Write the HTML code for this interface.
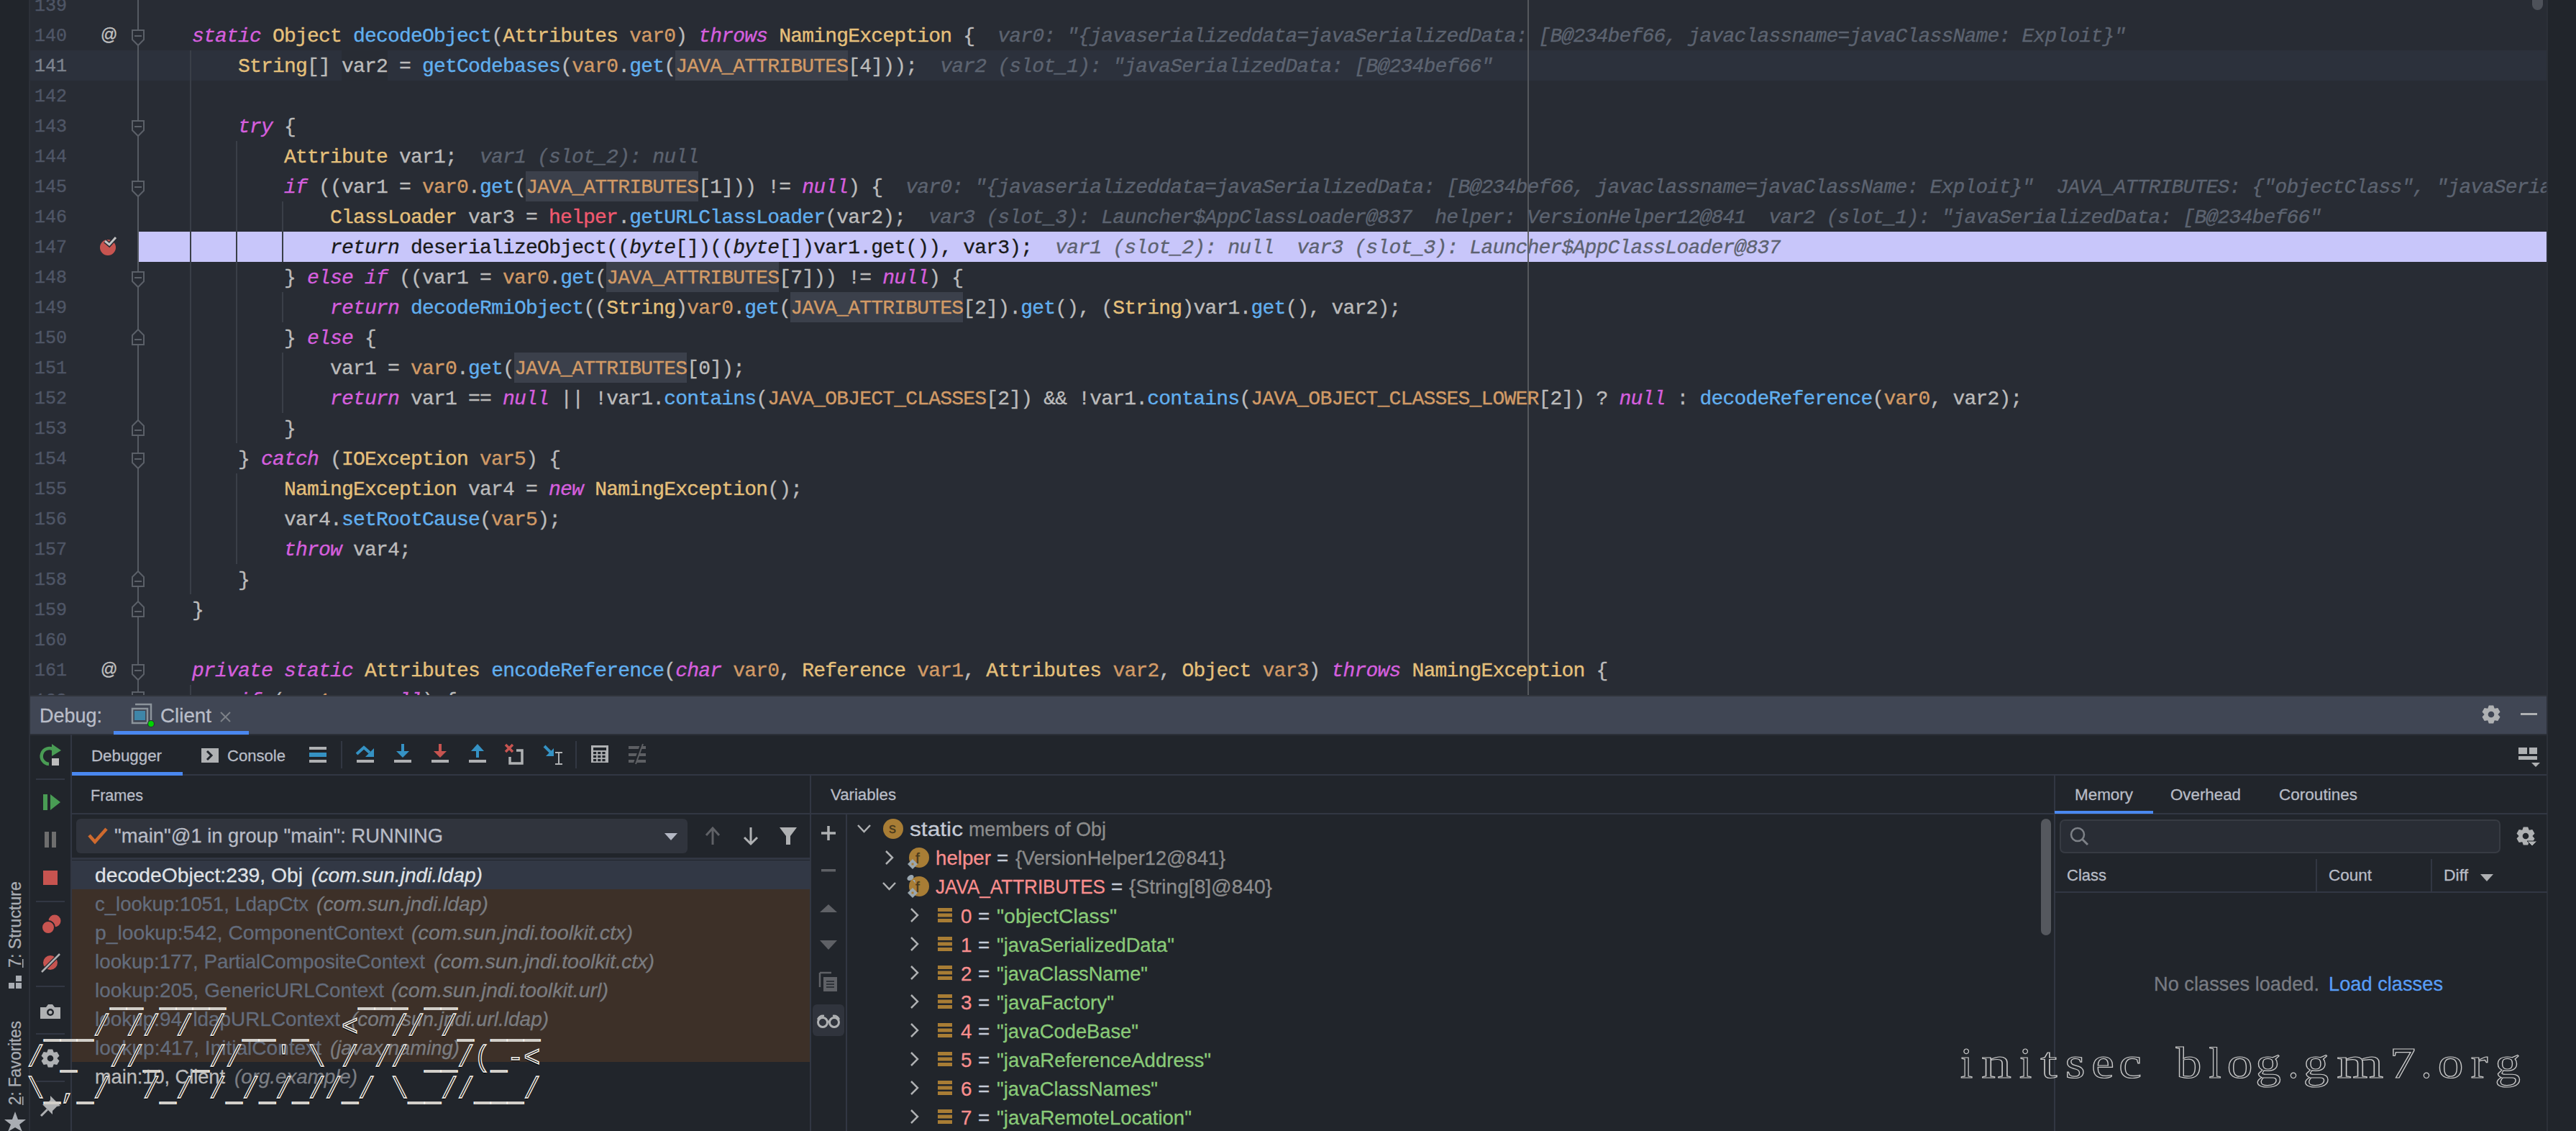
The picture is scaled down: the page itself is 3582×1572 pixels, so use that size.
<!DOCTYPE html><html><head><meta charset="utf-8"><title>debug</title><style>
*{margin:0;padding:0;box-sizing:border-box}
html,body{width:3582px;height:1572px;overflow:hidden;background:#21252b;position:relative}
.a{position:absolute}
.cl{-webkit-text-stroke:0.35px currentColor;position:absolute;height:42px;line-height:42px;font-family:"Liberation Mono",monospace;font-size:28px;letter-spacing:-0.8px;white-space:pre;color:#bbbbbb;padding-top:2px}
.k{color:#d55fde;font-style:italic}
.t{color:#e5c07b}
.c{color:#d19a66}
.p{color:#d19a66}
.h{color:#ef596f}
.f{color:#61afef}
.hint{color:#5c6370;font-style:italic}
.band,.band .k,.band .t,.band .c,.band .p,.band .h,.band .f{color:#1a1a1a}
.band .hint{color:#5d6270}
.k,.t,.c,.p,.h,.f,.hint{-webkit-text-stroke:0.35px currentColor}
.ln{position:absolute;width:60px;left:-9px;text-align:right;height:42px;line-height:42px;font-family:"Liberation Mono",monospace;font-size:25px;color:#4f5666;padding-top:2px;-webkit-text-stroke:0.4px currentColor}
svg text{font-family:"Liberation Sans",sans-serif;white-space:pre}
.art{position:absolute;font-family:"Liberation Mono",monospace;font-size:38.333px;line-height:43.5px;white-space:pre;color:#1c1a18;
 -webkit-text-stroke:1.4px #f6f2ec;text-shadow:1px 0 0 #000,-1px 0 0 #000,0 1px 0 #000,0 -1px 0 #000}
</style></head><body>
<div class="a" style="left:40px;top:0;width:2px;height:1572px;background:#2c3038"></div>
<div class="a" style="left:3541px;top:0;width:2px;height:1572px;background:#2c3038"></div>
<div class="a" style="left:42px;top:0;width:3499px;height:966px;background:#282c34;overflow:hidden">
<div class="a" style="left:0;top:70px;width:3499px;height:42px;background:#2c313c"></div>
<div class="a" style="left:433.0px;top:70px;width:64.0px;height:42px;background:#282c34"></div>
<div class="a" style="left:897.0px;top:70px;width:240.0px;height:42px;background:#3b404b"></div>
<div class="a" style="left:689.0px;top:238px;width:240.0px;height:42px;background:#3b404b"></div>
<div class="a" style="left:801.0px;top:364px;width:240.0px;height:42px;background:#3b404b"></div>
<div class="a" style="left:1057.0px;top:406px;width:240.0px;height:42px;background:#3b404b"></div>
<div class="a" style="left:673.0px;top:490px;width:240.0px;height:42px;background:#3b404b"></div>
<div class="a" style="left:151px;top:322px;width:3348px;height:42px;background:#c8c6fa"></div>
<div class="a" style="left:222px;top:70px;width:2px;height:756px;background:#3a3f48"></div>
<div class="a" style="left:286px;top:196px;width:2px;height:420px;background:#3a3f48"></div>
<div class="a" style="left:286px;top:658px;width:2px;height:126px;background:#3a3f48"></div>
<div class="a" style="left:350px;top:280px;width:2px;height:84px;background:#3a3f48"></div>
<div class="a" style="left:350px;top:406px;width:2px;height:42px;background:#3a3f48"></div>
<div class="a" style="left:350px;top:490px;width:2px;height:84px;background:#3a3f48"></div>
<div class="a" style="left:222px;top:952px;width:2px;height:14px;background:#3a3f48"></div>
<div class="a" style="left:2082px;top:0;width:2px;height:966px;background:#55585d"></div>
<div class="a" style="left:2082px;top:322px;width:2px;height:42px;background:#636468"></div>
<div class="a" style="left:149px;top:0;width:2px;height:966px;background:#555a62"></div>
<svg class="a" style="left:-42px;top:0" width="300" height="966"><path d="M184 42 H200 V55 L192 63 L184 55 Z" fill="#282c34" stroke="#5b6068" stroke-width="2"/><path d="M187 50 H197" stroke="#5b6068" stroke-width="2"/><path d="M184 168 H200 V181 L192 189 L184 181 Z" fill="#282c34" stroke="#5b6068" stroke-width="2"/><path d="M187 176 H197" stroke="#5b6068" stroke-width="2"/><path d="M184 252 H200 V265 L192 273 L184 265 Z" fill="#282c34" stroke="#5b6068" stroke-width="2"/><path d="M187 260 H197" stroke="#5b6068" stroke-width="2"/><path d="M184 378 H200 V391 L192 399 L184 391 Z" fill="#282c34" stroke="#5b6068" stroke-width="2"/><path d="M187 386 H197" stroke="#5b6068" stroke-width="2"/><path d="M184 479 H200 V466 L192 458 L184 466 Z" fill="#282c34" stroke="#5b6068" stroke-width="2"/><path d="M187 472 H197" stroke="#5b6068" stroke-width="2"/><path d="M184 605 H200 V592 L192 584 L184 592 Z" fill="#282c34" stroke="#5b6068" stroke-width="2"/><path d="M187 598 H197" stroke="#5b6068" stroke-width="2"/><path d="M184 630 H200 V643 L192 651 L184 643 Z" fill="#282c34" stroke="#5b6068" stroke-width="2"/><path d="M187 638 H197" stroke="#5b6068" stroke-width="2"/><path d="M184 815 H200 V802 L192 794 L184 802 Z" fill="#282c34" stroke="#5b6068" stroke-width="2"/><path d="M187 808 H197" stroke="#5b6068" stroke-width="2"/><path d="M184 857 H200 V844 L192 836 L184 844 Z" fill="#282c34" stroke="#5b6068" stroke-width="2"/><path d="M187 850 H197" stroke="#5b6068" stroke-width="2"/><path d="M184 924 H200 V937 L192 945 L184 937 Z" fill="#282c34" stroke="#5b6068" stroke-width="2"/><path d="M187 932 H197" stroke="#5b6068" stroke-width="2"/><path d="M184 966 V962 H200 V966" fill="#282c34" stroke="#5b6068" stroke-width="2"/><text x="140" y="56" font-size="23" fill="#c0c0c0" stroke="#c0c0c0" stroke-width="0.4">@</text><text x="140" y="938" font-size="23" fill="#c0c0c0" stroke="#c0c0c0" stroke-width="0.4">@</text><circle cx="150" cy="344" r="11" fill="#c75450"/><path d="M146 335 L152 340 L161 330" fill="none" stroke="#282c34" stroke-width="6"/><path d="M146 335 L152 340 L161 330" fill="none" stroke="#c4c4c4" stroke-width="3"/></svg>
<div class="ln" style="top:-14px;color:#4f5666">139</div>
<div class="ln" style="top:28px;color:#4f5666">140</div>
<div class="ln" style="top:70px;color:#7d838e">141</div>
<div class="ln" style="top:112px;color:#4f5666">142</div>
<div class="ln" style="top:154px;color:#4f5666">143</div>
<div class="ln" style="top:196px;color:#4f5666">144</div>
<div class="ln" style="top:238px;color:#4f5666">145</div>
<div class="ln" style="top:280px;color:#4f5666">146</div>
<div class="ln" style="top:322px;color:#4f5666">147</div>
<div class="ln" style="top:364px;color:#4f5666">148</div>
<div class="ln" style="top:406px;color:#4f5666">149</div>
<div class="ln" style="top:448px;color:#4f5666">150</div>
<div class="ln" style="top:490px;color:#4f5666">151</div>
<div class="ln" style="top:532px;color:#4f5666">152</div>
<div class="ln" style="top:574px;color:#4f5666">153</div>
<div class="ln" style="top:616px;color:#4f5666">154</div>
<div class="ln" style="top:658px;color:#4f5666">155</div>
<div class="ln" style="top:700px;color:#4f5666">156</div>
<div class="ln" style="top:742px;color:#4f5666">157</div>
<div class="ln" style="top:784px;color:#4f5666">158</div>
<div class="ln" style="top:826px;color:#4f5666">159</div>
<div class="ln" style="top:868px;color:#4f5666">160</div>
<div class="ln" style="top:910px;color:#4f5666">161</div>
<div class="ln" style="top:952px;color:#4f5666">162</div>
<div class="cl" style="left:225px;top:-14px"></div>
<div class="cl" style="left:225px;top:28px"><span class="k">static</span> <span class="t">Object</span> <span class="f">decodeObject</span>(<span class="t">Attributes</span> <span class="p">var0</span>) <span class="k">throws</span> <span class="t">NamingException</span> {  <span class="hint">var0: &quot;{javaserializeddata=javaSerializedData: [B@234bef66, javaclassname=javaClassName: Exploit}&quot;</span></div>
<div class="cl" style="left:225px;top:70px">    <span class="t">String</span>[] var2 = <span class="f">getCodebases</span>(<span class="p">var0</span>.<span class="f">get</span>(<span class="c">JAVA_ATTRIBUTES</span>[4]));  <span class="hint">var2 (slot_1): &quot;javaSerializedData: [B@234bef66&quot;</span></div>
<div class="cl" style="left:225px;top:112px"></div>
<div class="cl" style="left:225px;top:154px">    <span class="k">try</span> {</div>
<div class="cl" style="left:225px;top:196px">        <span class="t">Attribute</span> var1;  <span class="hint">var1 (slot_2): null</span></div>
<div class="cl" style="left:225px;top:238px">        <span class="k">if</span> ((var1 = <span class="p">var0</span>.<span class="f">get</span>(<span class="c">JAVA_ATTRIBUTES</span>[1])) != <span class="k">null</span>) {  <span class="hint">var0: &quot;{javaserializeddata=javaSerializedData: [B@234bef66, javaclassname=javaClassName: Exploit}&quot;  JAVA_ATTRIBUTES: {&quot;objectClass&quot;, &quot;javaSerializedData&quot;, &quot;javaClassName&quot;}</span></div>
<div class="cl" style="left:225px;top:280px">            <span class="t">ClassLoader</span> var3 = <span class="h">helper</span>.<span class="f">getURLClassLoader</span>(var2);  <span class="hint">var3 (slot_3): Launcher$AppClassLoader@837  helper: VersionHelper12@841  var2 (slot_1): &quot;javaSerializedData: [B@234bef66&quot;</span></div>
<div class="cl band" style="left:225px;top:322px">            <span class="k">return</span> <span class="f">deserializeObject</span>((<span class="k">byte</span>[])((<span class="k">byte</span>[])var1.<span class="f">get</span>()), var3);  <span class="hint">var1 (slot_2): null  var3 (slot_3): Launcher$AppClassLoader@837</span></div>
<div class="cl" style="left:225px;top:364px">        } <span class="k">else</span> <span class="k">if</span> ((var1 = <span class="p">var0</span>.<span class="f">get</span>(<span class="c">JAVA_ATTRIBUTES</span>[7])) != <span class="k">null</span>) {</div>
<div class="cl" style="left:225px;top:406px">            <span class="k">return</span> <span class="f">decodeRmiObject</span>((<span class="t">String</span>)<span class="p">var0</span>.<span class="f">get</span>(<span class="c">JAVA_ATTRIBUTES</span>[2]).<span class="f">get</span>(), (<span class="t">String</span>)var1.<span class="f">get</span>(), var2);</div>
<div class="cl" style="left:225px;top:448px">        } <span class="k">else</span> {</div>
<div class="cl" style="left:225px;top:490px">            var1 = <span class="p">var0</span>.<span class="f">get</span>(<span class="c">JAVA_ATTRIBUTES</span>[0]);</div>
<div class="cl" style="left:225px;top:532px">            <span class="k">return</span> var1 == <span class="k">null</span> || !var1.<span class="f">contains</span>(<span class="c">JAVA_OBJECT_CLASSES</span>[2]) &amp;&amp; !var1.<span class="f">contains</span>(<span class="c">JAVA_OBJECT_CLASSES_LOWER</span>[2]) ? <span class="k">null</span> : <span class="f">decodeReference</span>(<span class="p">var0</span>, var2);</div>
<div class="cl" style="left:225px;top:574px">        }</div>
<div class="cl" style="left:225px;top:616px">    } <span class="k">catch</span> (<span class="t">IOException</span> <span class="p">var5</span>) {</div>
<div class="cl" style="left:225px;top:658px">        <span class="t">NamingException</span> var4 = <span class="k">new</span> <span class="t">NamingException</span>();</div>
<div class="cl" style="left:225px;top:700px">        var4.<span class="f">setRootCause</span>(<span class="p">var5</span>);</div>
<div class="cl" style="left:225px;top:742px">        <span class="k">throw</span> var4;</div>
<div class="cl" style="left:225px;top:784px">    }</div>
<div class="cl" style="left:225px;top:826px">}</div>
<div class="cl" style="left:225px;top:868px"></div>
<div class="cl" style="left:225px;top:910px"><span class="k">private</span> <span class="k">static</span> <span class="t">Attributes</span> <span class="f">encodeReference</span>(<span class="k">char</span> <span class="p">var0</span>, <span class="t">Reference</span> <span class="p">var1</span>, <span class="t">Attributes</span> <span class="p">var2</span>, <span class="t">Object</span> <span class="p">var3</span>) <span class="k">throws</span> <span class="t">NamingException</span> {</div>
<div class="cl" style="left:225px;top:952px">    <span class="k">if</span> (<span class="p">var1</span> == <span class="k">null</span>) {</div>
<div class="a" style="left:3479px;top:-10px;width:15px;height:24px;border-radius:8px;background:#4d5159"></div>
</div>
<div class="a" style="left:42px;top:966px;width:3499px;height:2px;background:#30343c"></div>
<div class="a" style="left:42px;top:968px;width:3499px;height:52px;background:#404654"></div>
<div class="a" style="left:42px;top:1020px;width:3499px;height:2px;background:#2c3038"></div>
<div class="a" style="left:158px;top:1016px;width:188px;height:5px;background:#4a88f0"></div>
<div class="a" style="left:98px;top:1021px;width:2px;height:551px;background:#323743"></div>
<div class="a" style="left:100px;top:1076px;width:3441px;height:2px;background:#323743"></div>
<div class="a" style="left:100px;top:1073px;width:154px;height:5px;background:#4a88f0"></div>
<div class="a" style="left:100px;top:1130px;width:1026px;height:2px;background:#323743"></div>
<div class="a" style="left:106px;top:1138px;width:850px;height:48px;border-radius:6px;background:#30343d"></div>
<div class="a" style="left:100px;top:1192px;width:1026px;height:3px;background:#323743"></div>
<div class="a" style="left:100px;top:1196px;width:1026px;height:40px;background:#323845"></div>
<div class="a" style="left:100px;top:1236px;width:1026px;height:240px;background:#3d3028"></div>
<div class="a" style="left:1126px;top:1077px;width:2px;height:495px;background:#323743"></div>
<div class="a" style="left:1128px;top:1130px;width:1729px;height:2px;background:#323743"></div>
<div class="a" style="left:1176px;top:1132px;width:2px;height:440px;background:#323743"></div>
<div class="a" style="left:1130px;top:1396px;width:44px;height:44px;border-radius:6px;background:#30343d"></div>
<div class="a" style="left:2838px;top:1138px;width:14px;height:162px;border-radius:7px;background:#55585e"></div>
<div class="a" style="left:2856px;top:1077px;width:2px;height:495px;background:#323743"></div>
<div class="a" style="left:2858px;top:1130px;width:684px;height:2px;background:#323743"></div>
<div class="a" style="left:2857px;top:1127px;width:137px;height:4px;background:#4a88f0"></div>
<div class="a" style="left:2864px;top:1139px;width:613px;height:47px;border-radius:7px;background:#292d35;border:2px solid #373b43"></div>
<div class="a" style="left:3220px;top:1194px;width:2px;height:46px;background:#323743"></div>
<div class="a" style="left:3380px;top:1194px;width:2px;height:46px;background:#323743"></div>
<div class="a" style="left:2858px;top:1239px;width:684px;height:2px;background:#323743"></div>
<svg class="a" style="left:0;top:0" width="3582" height="1572"><text x="55" y="1004" font-size="27.5" fill="#b9bdc8" stroke="#b9bdc8" stroke-width="0.3" textLength="87" lengthAdjust="spacingAndGlyphs">Debug:</text><path d="M188 979 H210 V1003" fill="none" stroke="#8c949b" stroke-width="2.5"/><rect x="184" y="985" width="21" height="20" fill="none" stroke="#8c949b" stroke-width="2.5"/><rect x="187" y="988" width="15" height="13" fill="#3f86a8"/><circle cx="210" cy="1006" r="4.5" fill="#00d400" stroke="#2b2f36" stroke-width="1.2"/><text x="223" y="1004" font-size="27.5" fill="#b9bdc8" stroke="#b9bdc8" stroke-width="0.3" textLength="71" lengthAdjust="spacingAndGlyphs">Client</text><path d="M307 990 L320 1003 M320 990 L307 1003" stroke="#7d8188" stroke-width="2"/><path d="M3460.8 980.4 L3467.2 980.4 L3468.6 984.6 L3469.0 984.8 L3473.3 983.9 L3476.5 989.5 L3473.6 992.8 L3473.6 993.2 L3476.5 996.5 L3473.3 1002.1 L3469.0 1001.2 L3468.6 1001.4 L3467.2 1005.6 L3460.8 1005.6 L3459.4 1001.4 L3459.0 1001.2 L3454.7 1002.1 L3451.5 996.5 L3454.4 993.2 L3454.4 992.8 L3451.5 989.5 L3454.7 983.9 L3459.0 984.8 L3459.4 984.6 Z" fill="#afb1b3"/><circle cx="3464" cy="993" r="4.3" fill="#404654"/><rect x="3505" y="991" width="23" height="3" fill="#afb1b3"/><text x="127" y="1058" font-size="22.4" fill="#b8bcc6" stroke="#b8bcc6" stroke-width="0.3" textLength="98" lengthAdjust="spacingAndGlyphs">Debugger</text><rect x="280" y="1040" width="24" height="20" fill="#afb1b3"/><path d="M288 1044 L294 1050 L288 1056" fill="none" stroke="#21252b" stroke-width="3"/><text x="316" y="1058" font-size="22.4" fill="#b8bcc6" stroke="#b8bcc6" stroke-width="0.3" textLength="81" lengthAdjust="spacingAndGlyphs">Console</text><rect x="430" y="1038" width="24" height="4" fill="#afb1b3"/><rect x="430" y="1046" width="24" height="6" fill="#3592c4"/><rect x="430" y="1056" width="24" height="4" fill="#afb1b3"/><rect x="474" y="1030" width="2" height="38" fill="#323743"/><rect x="496" y="1056" width="24" height="4" fill="#afb1b3"/><path d="M496 1048 L506 1039 L514 1046" fill="none" stroke="#3592c4" stroke-width="4"/><path d="M520 1040 V1052 H508 Z" fill="#3592c4"/><rect x="548" y="1056" width="24" height="4" fill="#afb1b3"/><rect x="558" y="1034" width="4" height="11" fill="#3592c4"/><path d="M551 1044 H569 L560 1053 Z" fill="#3592c4"/><rect x="600" y="1056" width="24" height="4" fill="#afb1b3"/><rect x="610" y="1034" width="4" height="11" fill="#c75450"/><path d="M603 1044 H621 L612 1053 Z" fill="#c75450"/><rect x="652" y="1056" width="24" height="4" fill="#afb1b3"/><rect x="662" y="1042" width="4" height="11" fill="#3592c4"/><path d="M655 1044 H673 L664 1034 Z" fill="#3592c4"/><path d="M718 1043 H726 V1061 H709 V1052" fill="none" stroke="#afb1b3" stroke-width="3.5"/><path d="M703 1035 L713 1045 M713 1035 L703 1045" stroke="#c75450" stroke-width="3.5"/><path d="M757 1037 L768 1048" stroke="#3592c4" stroke-width="4"/><path d="M770 1040 V1051 H759 Z" fill="#3592c4"/><path d="M772 1046 H782 M777 1046 V1062 M772 1062 H782" stroke="#afb1b3" stroke-width="2"/><rect x="800" y="1030" width="2" height="38" fill="#323743"/><rect x="822" y="1036" width="24" height="24" fill="#afb1b3"/><rect x="825" y="1039" width="18" height="4" fill="#21252b"/><rect x="825.0" y="1045" width="4.2" height="3.2" fill="#21252b"/><rect x="825.0" y="1050" width="4.2" height="3.2" fill="#21252b"/><rect x="825.0" y="1055" width="4.2" height="3.2" fill="#21252b"/><rect x="831.2" y="1045" width="4.2" height="3.2" fill="#21252b"/><rect x="831.2" y="1050" width="4.2" height="3.2" fill="#21252b"/><rect x="831.2" y="1055" width="4.2" height="3.2" fill="#21252b"/><rect x="837.4" y="1045" width="4.2" height="3.2" fill="#21252b"/><rect x="837.4" y="1050" width="4.2" height="3.2" fill="#21252b"/><rect x="837.4" y="1055" width="4.2" height="3.2" fill="#21252b"/><path d="M874 1039 H898 M874 1049 H898 M874 1058 H898" stroke="#5d5f63" stroke-width="4"/><path d="M882 1062 L892 1034" stroke="#21252b" stroke-width="3"/><path d="M884 1062 L894 1034" stroke="#5d5f63" stroke-width="2"/><rect x="3502" y="1039" width="12" height="9" fill="#afb1b3"/><rect x="3517" y="1039" width="11" height="9" fill="#afb1b3"/><rect x="3502" y="1051" width="26" height="5" fill="#afb1b3"/><path d="M3520 1060 H3532 L3526 1066 Z" fill="#afb1b3"/><path d="M68 1062 A11 11 0 1 1 75 1042" fill="none" stroke="#499c54" stroke-width="4.5"/><path d="M72 1034 L85 1043 L72 1051 Z" fill="#499c54"/><rect x="72" y="1054" width="10" height="10" fill="#bdbdbd"/><rect x="50" y="1082" width="40" height="2" fill="#323743"/><rect x="60" y="1104" width="6" height="22" fill="#499c54"/><path d="M70 1104 L84 1115 L70 1126 Z" fill="#499c54"/><rect x="62" y="1156" width="6" height="22" fill="#6e6e6e"/><rect x="72" y="1156" width="6" height="22" fill="#6e6e6e"/><rect x="60" y="1210" width="20" height="20" fill="#c75450"/><rect x="50" y="1252" width="40" height="2" fill="#323743"/><circle cx="76" cy="1280" r="8.5" fill="#c75450"/><circle cx="67" cy="1289" r="9" fill="#c75450" stroke="#21252b" stroke-width="2"/><circle cx="70" cy="1338" r="10" fill="#c75450"/><path d="M58 1351 L83 1326" stroke="#21252b" stroke-width="5"/><path d="M58 1351 L83 1326" stroke="#afb1b3" stroke-width="2.5"/><rect x="50" y="1370" width="40" height="2" fill="#323743"/><path d="M56 1400 H64 L67 1396 H73 L76 1400 H84 V1416 H56 Z" fill="#afb1b3"/><circle cx="70" cy="1407" r="5" fill="#21252b"/><circle cx="70" cy="1407" r="2.5" fill="#afb1b3"/><rect x="50" y="1436" width="40" height="2" fill="#323743"/><path d="M66.8 1458.4 L73.2 1458.4 L74.6 1462.6 L75.0 1462.8 L79.3 1461.9 L82.5 1467.5 L79.6 1470.8 L79.6 1471.2 L82.5 1474.5 L79.3 1480.1 L75.0 1479.2 L74.6 1479.4 L73.2 1483.6 L66.8 1483.6 L65.4 1479.4 L65.0 1479.2 L60.7 1480.1 L57.5 1474.5 L60.4 1471.2 L60.4 1470.8 L57.5 1467.5 L60.7 1461.9 L65.0 1462.8 L65.4 1462.6 Z" fill="#afb1b3"/><circle cx="70" cy="1471" r="4.3" fill="#21252b"/><rect x="50" y="1502" width="40" height="2" fill="#323743"/><path d="M70 1523 L84 1537 L79 1538 L73 1544 L73 1549 L59 1535 L64 1535 L70 1529 Z" fill="#afb1b3"/><path d="M66 1542 L57 1551" stroke="#afb1b3" stroke-width="3"/><g transform="translate(29,1345) rotate(-90)"><text x="0" y="0" font-size="23" fill="#a9adb3" stroke="#a9adb3" stroke-width="0.3" textLength="120" lengthAdjust="spacingAndGlyphs">7: Structure</text><rect x="0" y="2" width="12" height="1.5" fill="#a9adb3"/></g><rect x="12" y="1366" width="8" height="8" fill="#a9adb3"/><rect x="22" y="1366" width="8" height="8" fill="#a9adb3"/><rect x="22" y="1356" width="8" height="8" fill="#a9adb3"/><g transform="translate(29,1536) rotate(-90)"><text x="0" y="0" font-size="23" fill="#a9adb3" stroke="#a9adb3" stroke-width="0.3" textLength="117" lengthAdjust="spacingAndGlyphs">2: Favorites</text><rect x="0" y="2" width="12" height="1.5" fill="#a9adb3"/></g><path d="M21 1545 L25 1556 L36 1556 L27 1563 L31 1573 L21 1567 L11 1573 L15 1563 L6 1556 L17 1556 Z" fill="#a9adb3"/><text x="126" y="1113" font-size="22.4" fill="#b8bcc6" stroke="#b8bcc6" stroke-width="0.3" textLength="73" lengthAdjust="spacingAndGlyphs">Frames</text><path d="M124 1161 L132 1170 L148 1152" fill="none" stroke="#cf6a2e" stroke-width="4.5"/><text x="159" y="1171" font-size="27.3" fill="#b8bcc6" stroke="#b8bcc6" stroke-width="0.3" textLength="457" lengthAdjust="spacingAndGlyphs">&quot;main&quot;@1 in group &quot;main&quot;: RUNNING</text><path d="M924 1158 H942 L933 1168 Z" fill="#b4b8c4"/><path d="M991 1174 V1152 M982 1161 L991 1151 L1000 1161" fill="none" stroke="#5f6166" stroke-width="3"/><path d="M1044 1150 V1173 M1035 1164 L1044 1173 L1053 1164" fill="none" stroke="#afb1b3" stroke-width="3"/><path d="M1084 1150 H1108 L1099 1162 V1174 H1093 V1162 Z" fill="#afb1b3"/><text x="132" y="1226" font-size="28" fill="#dfe1e5" stroke="#dfe1e5" stroke-width="0.3" textLength="289" lengthAdjust="spacingAndGlyphs">decodeObject:239, Obj</text><text x="433" y="1226" font-size="28" fill="#dfe1e5" stroke="#dfe1e5" stroke-width="0.3" textLength="238" lengthAdjust="spacingAndGlyphs" font-style="italic">(com.sun.jndi.ldap)</text><text x="132" y="1266" font-size="28" fill="#636c7c" stroke="#636c7c" stroke-width="0.3" textLength="297" lengthAdjust="spacingAndGlyphs">c_lookup:1051, LdapCtx</text><text x="440" y="1266" font-size="28" fill="#7a7c80" stroke="#7a7c80" stroke-width="0.3" textLength="239" lengthAdjust="spacingAndGlyphs" font-style="italic">(com.sun.jndi.ldap)</text><text x="132" y="1306" font-size="28" fill="#636c7c" stroke="#636c7c" stroke-width="0.3" textLength="429" lengthAdjust="spacingAndGlyphs">p_lookup:542, ComponentContext</text><text x="572" y="1306" font-size="28" fill="#7a7c80" stroke="#7a7c80" stroke-width="0.3" textLength="308" lengthAdjust="spacingAndGlyphs" font-style="italic">(com.sun.jndi.toolkit.ctx)</text><text x="132" y="1346" font-size="28" fill="#636c7c" stroke="#636c7c" stroke-width="0.3" textLength="459" lengthAdjust="spacingAndGlyphs">lookup:177, PartialCompositeContext</text><text x="603" y="1346" font-size="28" fill="#7a7c80" stroke="#7a7c80" stroke-width="0.3" textLength="307" lengthAdjust="spacingAndGlyphs" font-style="italic">(com.sun.jndi.toolkit.ctx)</text><text x="132" y="1386" font-size="28" fill="#636c7c" stroke="#636c7c" stroke-width="0.3" textLength="402" lengthAdjust="spacingAndGlyphs">lookup:205, GenericURLContext</text><text x="544" y="1386" font-size="28" fill="#7a7c80" stroke="#7a7c80" stroke-width="0.3" textLength="302" lengthAdjust="spacingAndGlyphs" font-style="italic">(com.sun.jndi.toolkit.url)</text><text x="132" y="1426" font-size="28" fill="#636c7c" stroke="#636c7c" stroke-width="0.3" textLength="341" lengthAdjust="spacingAndGlyphs">lookup:94, ldapURLContext</text><text x="488" y="1426" font-size="28" fill="#7a7c80" stroke="#7a7c80" stroke-width="0.3" textLength="275" lengthAdjust="spacingAndGlyphs" font-style="italic">(com.sun.jndi.url.ldap)</text><text x="132" y="1466" font-size="28" fill="#636c7c" stroke="#636c7c" stroke-width="0.3" textLength="315" lengthAdjust="spacingAndGlyphs">lookup:417, InitialContext</text><text x="459" y="1466" font-size="28" fill="#7a7c80" stroke="#7a7c80" stroke-width="0.3" textLength="180" lengthAdjust="spacingAndGlyphs" font-style="italic">(javax.naming)</text><text x="132" y="1506" font-size="28" fill="#bbbbbb" stroke="#bbbbbb" stroke-width="0.3" textLength="181" lengthAdjust="spacingAndGlyphs">main:10, Client</text><text x="326" y="1506" font-size="28" fill="#7b7e84" stroke="#7b7e84" stroke-width="0.3" textLength="171" lengthAdjust="spacingAndGlyphs" font-style="italic">(org.example)</text><text x="1155" y="1112" font-size="22.4" fill="#b8bcc6" stroke="#b8bcc6" stroke-width="0.3" textLength="91" lengthAdjust="spacingAndGlyphs">Variables</text><path d="M1152 1148 V1168 M1142 1158 H1162" stroke="#afb1b3" stroke-width="3.5"/><rect x="1142" y="1208" width="20" height="3.5" fill="#5f6166"/><path d="M1140 1268 L1152 1257 L1164 1268 Z" fill="#5f6166"/><path d="M1140 1307 L1152 1320 L1164 1307 Z" fill="#5f6166"/><path d="M1140 1352 H1156 M1140 1352 V1372" stroke="#5f6166" stroke-width="2.5" fill="none"/><rect x="1145" y="1358" width="19" height="20" fill="#5f6166"/><path d="M1149 1364 H1160 M1149 1368 H1160 M1149 1372 H1160" stroke="#21252b" stroke-width="1.5"/><circle cx="1144" cy="1421" r="6.5" fill="none" stroke="#afb1b3" stroke-width="3"/><circle cx="1160" cy="1421" r="6.5" fill="none" stroke="#afb1b3" stroke-width="3"/><path d="M1137 1417 Q1140 1411 1146 1412 M1150 1420 H1154 M1167 1417 Q1164 1411 1158 1412" stroke="#afb1b3" stroke-width="2.5" fill="none"/><path d="M1193 1147 L1201.5 1156 L1210 1147" fill="none" stroke="#afb1b3" stroke-width="2.5"/><circle cx="1242" cy="1152" r="14" fill="#a87d35"/><text x="1236" y="1158" font-size="20" fill="#47381c" stroke="#47381c" stroke-width="0.3">s</text><text x="1265" y="1162" font-size="27.7" fill="#c4cad6" stroke="#c4cad6" stroke-width="0.3" textLength="74" lengthAdjust="spacingAndGlyphs">static</text><text x="1347" y="1162" font-size="27.7" fill="#8c8c8c" stroke="#8c8c8c" stroke-width="0.3" textLength="191" lengthAdjust="spacingAndGlyphs">members of Obj</text><path d="M1232 1183 L1241 1192 L1232 1201" fill="none" stroke="#afb1b3" stroke-width="2.5"/><circle cx="1278" cy="1192" r="14" fill="#a87d35"/><text x="1273" y="1200" font-size="21" fill="#47381c" stroke="#47381c" stroke-width="0.3">f</text><path d="M1269 1194 L1276 1201 L1269 1208 L1262 1201 Z" fill="#9aa7b0"/><rect x="1267.5" y="1199.5" width="3" height="3" fill="#a87d35"/><text x="1301" y="1202" font-size="27.7" fill="#f98e8e" stroke="#f98e8e" stroke-width="0.3" textLength="77" lengthAdjust="spacingAndGlyphs">helper</text><text x="1386" y="1202" font-size="27.7" fill="#c4cad6" stroke="#c4cad6" stroke-width="0.3">=</text><text x="1412" y="1202" font-size="27.7" fill="#8c8c8c" stroke="#8c8c8c" stroke-width="0.3" textLength="292" lengthAdjust="spacingAndGlyphs">{VersionHelper12@841}</text><path d="M1228 1227 L1236.5 1236 L1245 1227" fill="none" stroke="#afb1b3" stroke-width="2.5"/><circle cx="1278" cy="1232" r="14" fill="#a87d35"/><text x="1273" y="1240" font-size="21" fill="#47381c" stroke="#47381c" stroke-width="0.3">f</text><path d="M1269 1234 L1276 1241 L1269 1248 L1262 1241 Z" fill="#9aa7b0"/><rect x="1267.5" y="1239.5" width="3" height="3" fill="#a87d35"/><ellipse cx="1266" cy="1220" rx="5" ry="3.5" fill="#9aa7b0" transform="rotate(-35 1266 1220)"/><path d="M1269 1223 L1273 1228 L1272 1223 Z" fill="#9aa7b0"/><text x="1301" y="1242" font-size="27.7" fill="#f98e8e" stroke="#f98e8e" stroke-width="0.3" textLength="236" lengthAdjust="spacingAndGlyphs">JAVA_ATTRIBUTES</text><text x="1545" y="1242" font-size="27.7" fill="#c4cad6" stroke="#c4cad6" stroke-width="0.3">=</text><text x="1570" y="1242" font-size="27.7" fill="#8c8c8c" stroke="#8c8c8c" stroke-width="0.3" textLength="199" lengthAdjust="spacingAndGlyphs">{String[8]@840}</text><path d="M1267 1263 L1276 1272 L1267 1281" fill="none" stroke="#afb1b3" stroke-width="2.5"/><rect x="1304" y="1262" width="20" height="5" fill="#a87d35"/><rect x="1304" y="1269.5" width="20" height="5" fill="#a87d35"/><rect x="1304" y="1277" width="20" height="5" fill="#a87d35"/><text x="1336" y="1283" font-size="27.7" fill="#f98e8e" stroke="#f98e8e" stroke-width="0.3">0</text><text x="1360" y="1283" font-size="27.7" fill="#c4cad6" stroke="#c4cad6" stroke-width="0.3">=</text><text x="1386" y="1283" font-size="27.7" fill="#89ca78" stroke="#89ca78" stroke-width="0.3" textLength="167" lengthAdjust="spacingAndGlyphs">&quot;objectClass&quot;</text><path d="M1267 1303 L1276 1312 L1267 1321" fill="none" stroke="#afb1b3" stroke-width="2.5"/><rect x="1304" y="1302" width="20" height="5" fill="#a87d35"/><rect x="1304" y="1309.5" width="20" height="5" fill="#a87d35"/><rect x="1304" y="1317" width="20" height="5" fill="#a87d35"/><text x="1336" y="1323" font-size="27.7" fill="#f98e8e" stroke="#f98e8e" stroke-width="0.3">1</text><text x="1360" y="1323" font-size="27.7" fill="#c4cad6" stroke="#c4cad6" stroke-width="0.3">=</text><text x="1386" y="1323" font-size="27.7" fill="#89ca78" stroke="#89ca78" stroke-width="0.3" textLength="247" lengthAdjust="spacingAndGlyphs">&quot;javaSerializedData&quot;</text><path d="M1267 1343 L1276 1352 L1267 1361" fill="none" stroke="#afb1b3" stroke-width="2.5"/><rect x="1304" y="1342" width="20" height="5" fill="#a87d35"/><rect x="1304" y="1349.5" width="20" height="5" fill="#a87d35"/><rect x="1304" y="1357" width="20" height="5" fill="#a87d35"/><text x="1336" y="1363" font-size="27.7" fill="#f98e8e" stroke="#f98e8e" stroke-width="0.3">2</text><text x="1360" y="1363" font-size="27.7" fill="#c4cad6" stroke="#c4cad6" stroke-width="0.3">=</text><text x="1386" y="1363" font-size="27.7" fill="#89ca78" stroke="#89ca78" stroke-width="0.3" textLength="210" lengthAdjust="spacingAndGlyphs">&quot;javaClassName&quot;</text><path d="M1267 1383 L1276 1392 L1267 1401" fill="none" stroke="#afb1b3" stroke-width="2.5"/><rect x="1304" y="1382" width="20" height="5" fill="#a87d35"/><rect x="1304" y="1389.5" width="20" height="5" fill="#a87d35"/><rect x="1304" y="1397" width="20" height="5" fill="#a87d35"/><text x="1336" y="1403" font-size="27.7" fill="#f98e8e" stroke="#f98e8e" stroke-width="0.3">3</text><text x="1360" y="1403" font-size="27.7" fill="#c4cad6" stroke="#c4cad6" stroke-width="0.3">=</text><text x="1386" y="1403" font-size="27.7" fill="#89ca78" stroke="#89ca78" stroke-width="0.3" textLength="163" lengthAdjust="spacingAndGlyphs">&quot;javaFactory&quot;</text><path d="M1267 1423 L1276 1432 L1267 1441" fill="none" stroke="#afb1b3" stroke-width="2.5"/><rect x="1304" y="1422" width="20" height="5" fill="#a87d35"/><rect x="1304" y="1429.5" width="20" height="5" fill="#a87d35"/><rect x="1304" y="1437" width="20" height="5" fill="#a87d35"/><text x="1336" y="1443" font-size="27.7" fill="#f98e8e" stroke="#f98e8e" stroke-width="0.3">4</text><text x="1360" y="1443" font-size="27.7" fill="#c4cad6" stroke="#c4cad6" stroke-width="0.3">=</text><text x="1386" y="1443" font-size="27.7" fill="#89ca78" stroke="#89ca78" stroke-width="0.3" textLength="197" lengthAdjust="spacingAndGlyphs">&quot;javaCodeBase&quot;</text><path d="M1267 1463 L1276 1472 L1267 1481" fill="none" stroke="#afb1b3" stroke-width="2.5"/><rect x="1304" y="1462" width="20" height="5" fill="#a87d35"/><rect x="1304" y="1469.5" width="20" height="5" fill="#a87d35"/><rect x="1304" y="1477" width="20" height="5" fill="#a87d35"/><text x="1336" y="1483" font-size="27.7" fill="#f98e8e" stroke="#f98e8e" stroke-width="0.3">5</text><text x="1360" y="1483" font-size="27.7" fill="#c4cad6" stroke="#c4cad6" stroke-width="0.3">=</text><text x="1386" y="1483" font-size="27.7" fill="#89ca78" stroke="#89ca78" stroke-width="0.3" textLength="298" lengthAdjust="spacingAndGlyphs">&quot;javaReferenceAddress&quot;</text><path d="M1267 1503 L1276 1512 L1267 1521" fill="none" stroke="#afb1b3" stroke-width="2.5"/><rect x="1304" y="1502" width="20" height="5" fill="#a87d35"/><rect x="1304" y="1509.5" width="20" height="5" fill="#a87d35"/><rect x="1304" y="1517" width="20" height="5" fill="#a87d35"/><text x="1336" y="1523" font-size="27.7" fill="#f98e8e" stroke="#f98e8e" stroke-width="0.3">6</text><text x="1360" y="1523" font-size="27.7" fill="#c4cad6" stroke="#c4cad6" stroke-width="0.3">=</text><text x="1386" y="1523" font-size="27.7" fill="#89ca78" stroke="#89ca78" stroke-width="0.3" textLength="224" lengthAdjust="spacingAndGlyphs">&quot;javaClassNames&quot;</text><path d="M1267 1543 L1276 1552 L1267 1561" fill="none" stroke="#afb1b3" stroke-width="2.5"/><rect x="1304" y="1542" width="20" height="5" fill="#a87d35"/><rect x="1304" y="1549.5" width="20" height="5" fill="#a87d35"/><rect x="1304" y="1557" width="20" height="5" fill="#a87d35"/><text x="1336" y="1563" font-size="27.7" fill="#f98e8e" stroke="#f98e8e" stroke-width="0.3">7</text><text x="1360" y="1563" font-size="27.7" fill="#c4cad6" stroke="#c4cad6" stroke-width="0.3">=</text><text x="1386" y="1563" font-size="27.7" fill="#89ca78" stroke="#89ca78" stroke-width="0.3" textLength="271" lengthAdjust="spacingAndGlyphs">&quot;javaRemoteLocation&quot;</text><text x="2885" y="1112" font-size="22.5" fill="#b8bcc6" stroke="#b8bcc6" stroke-width="0.3" textLength="81" lengthAdjust="spacingAndGlyphs">Memory</text><text x="3018" y="1112" font-size="22.5" fill="#b8bcc6" stroke="#b8bcc6" stroke-width="0.3" textLength="98" lengthAdjust="spacingAndGlyphs">Overhead</text><text x="3169" y="1112" font-size="22.5" fill="#b8bcc6" stroke="#b8bcc6" stroke-width="0.3" textLength="109" lengthAdjust="spacingAndGlyphs">Coroutines</text><circle cx="2889" cy="1160" r="9" fill="none" stroke="#7d8187" stroke-width="2.5"/><path d="M2895 1166 L2903 1174" stroke="#7d8187" stroke-width="3"/><path d="M3508.8 1149.4 L3515.2 1149.4 L3516.6 1153.6 L3517.0 1153.8 L3521.3 1152.9 L3524.5 1158.5 L3521.6 1161.8 L3521.6 1162.2 L3524.5 1165.5 L3521.3 1171.1 L3517.0 1170.2 L3516.6 1170.4 L3515.2 1174.6 L3508.8 1174.6 L3507.4 1170.4 L3507.0 1170.2 L3502.7 1171.1 L3499.5 1165.5 L3502.4 1162.2 L3502.4 1161.8 L3499.5 1158.5 L3502.7 1152.9 L3507.0 1153.8 L3507.4 1153.6 Z" fill="#afb1b3"/><circle cx="3512" cy="1162" r="4.3" fill="#21252b"/><path d="M3514 1169 H3528 L3521 1176 Z" fill="#afb1b3" stroke="#21252b" stroke-width="1"/><text x="2874" y="1224" font-size="22.5" fill="#b8bcc6" stroke="#b8bcc6" stroke-width="0.3" textLength="55" lengthAdjust="spacingAndGlyphs">Class</text><text x="3238" y="1224" font-size="22.5" fill="#b8bcc6" stroke="#b8bcc6" stroke-width="0.3" textLength="60" lengthAdjust="spacingAndGlyphs">Count</text><text x="3398" y="1224" font-size="22.5" fill="#b8bcc6" stroke="#b8bcc6" stroke-width="0.3" textLength="34" lengthAdjust="spacingAndGlyphs">Diff</text><path d="M3449 1215 H3467 L3458 1225 Z" fill="#afb1b3"/><text x="2995" y="1377" font-size="27.6" fill="#787b82" stroke="#787b82" stroke-width="0.3" textLength="230" lengthAdjust="spacingAndGlyphs">No classes loaded.</text><text x="3238" y="1377" font-size="27.6" fill="#589df6" stroke="#589df6" stroke-width="0.3" textLength="159" lengthAdjust="spacingAndGlyphs">Load classes</text><text x="0" y="0" transform="translate(2734.5,1498) scale(1.0,1)" style="font-family:'Liberation Serif',serif" font-size="62" text-anchor="middle" fill="none" stroke="#c8c8c8" stroke-width="1.2">i</text><text x="0" y="0" transform="translate(2776.0,1498) scale(1.35,1)" style="font-family:'Liberation Serif',serif" font-size="62" text-anchor="middle" fill="none" stroke="#c8c8c8" stroke-width="1.2">n</text><text x="0" y="0" transform="translate(2816.5,1498) scale(1.0,1)" style="font-family:'Liberation Serif',serif" font-size="62" text-anchor="middle" fill="none" stroke="#c8c8c8" stroke-width="1.2">i</text><text x="0" y="0" transform="translate(2849.0,1498) scale(1.35,1)" style="font-family:'Liberation Serif',serif" font-size="62" text-anchor="middle" fill="none" stroke="#c8c8c8" stroke-width="1.2">t</text><text x="0" y="0" transform="translate(2885.5,1498) scale(1.15,1)" style="font-family:'Liberation Serif',serif" font-size="62" text-anchor="middle" fill="none" stroke="#c8c8c8" stroke-width="1.2">s</text><text x="0" y="0" transform="translate(2924.0,1498) scale(1.15,1)" style="font-family:'Liberation Serif',serif" font-size="62" text-anchor="middle" fill="none" stroke="#c8c8c8" stroke-width="1.2">e</text><text x="0" y="0" transform="translate(2962.0,1498) scale(1.15,1)" style="font-family:'Liberation Serif',serif" font-size="62" text-anchor="middle" fill="none" stroke="#c8c8c8" stroke-width="1.2">c</text><text x="0" y="0" transform="translate(3043.6,1498) scale(1.15,1)" style="font-family:'Liberation Serif',serif" font-size="62" text-anchor="middle" fill="none" stroke="#c8c8c8" stroke-width="1.2">b</text><text x="0" y="0" transform="translate(3080.0,1498) scale(1.0,1)" style="font-family:'Liberation Serif',serif" font-size="62" text-anchor="middle" fill="none" stroke="#c8c8c8" stroke-width="1.2">l</text><text x="0" y="0" transform="translate(3114.5,1498) scale(1.15,1)" style="font-family:'Liberation Serif',serif" font-size="62" text-anchor="middle" fill="none" stroke="#c8c8c8" stroke-width="1.2">o</text><text x="0" y="0" transform="translate(3154.0,1498) scale(1.15,1)" style="font-family:'Liberation Serif',serif" font-size="62" text-anchor="middle" fill="none" stroke="#c8c8c8" stroke-width="1.2">g</text><text x="0" y="0" transform="translate(3189.0,1498) scale(1.0,1)" style="font-family:'Liberation Serif',serif" font-size="62" text-anchor="middle" fill="none" stroke="#c8c8c8" stroke-width="1.2">.</text><text x="0" y="0" transform="translate(3220.5,1498) scale(1.15,1)" style="font-family:'Liberation Serif',serif" font-size="62" text-anchor="middle" fill="none" stroke="#c8c8c8" stroke-width="1.2">g</text><text x="0" y="0" transform="translate(3281.7,1498) scale(1.35,1)" style="font-family:'Liberation Serif',serif" font-size="62" text-anchor="middle" fill="none" stroke="#c8c8c8" stroke-width="1.2">m</text><text x="0" y="0" transform="translate(3341.0,1498) scale(1.15,1)" style="font-family:'Liberation Serif',serif" font-size="62" text-anchor="middle" fill="none" stroke="#c8c8c8" stroke-width="1.2">7</text><text x="0" y="0" transform="translate(3374.0,1498) scale(1.0,1)" style="font-family:'Liberation Serif',serif" font-size="62" text-anchor="middle" fill="none" stroke="#c8c8c8" stroke-width="1.2">.</text><text x="0" y="0" transform="translate(3407.5,1498) scale(1.15,1)" style="font-family:'Liberation Serif',serif" font-size="62" text-anchor="middle" fill="none" stroke="#c8c8c8" stroke-width="1.2">o</text><text x="0" y="0" transform="translate(3447.6,1498) scale(1.15,1)" style="font-family:'Liberation Serif',serif" font-size="62" text-anchor="middle" fill="none" stroke="#c8c8c8" stroke-width="1.2">r</text><text x="0" y="0" transform="translate(3487.0,1498) scale(1.15,1)" style="font-family:'Liberation Serif',serif" font-size="62" text-anchor="middle" fill="none" stroke="#c8c8c8" stroke-width="1.2">g</text></svg>
<div class="art" style="left:38px;top:1362.0px;transform:scaleY(1.08);transform-origin:0 0">     <span style="position:relative;top:3px">__</span> <span style="position:relative;top:3px">____</span>        <span style="position:relative;top:3px">___</span> <span style="position:relative;top:3px">__</span>     </div>
<div class="art" style="left:38px;top:1405.5px;transform:scaleY(1.08);transform-origin:0 0"> <span style="position:relative;top:3px">___</span>/ // / / <span style="position:relative;top:3px">__</span> <span style="position:relative;top:3px">_</span>  &lt;  // /<span style="position:relative;top:3px">_</span> <span style="position:relative;top:3px">___</span></div>
<div class="art" style="left:38px;top:1449.0px;transform:scaleY(1.08);transform-origin:0 0">/ <span style="position:relative;top:3px">_</span>  //<span style="position:relative;top:3px">_</span>  <span style="position:relative;top:3px">_</span>//  &#x27; \ / // <span style="position:relative;top:3px">__</span>/(<span style="position:relative;top:3px">_</span>-&lt;</div>
<div class="art" style="left:38px;top:1492.5px;transform:scaleY(1.08);transform-origin:0 0">\<span style="position:relative;top:3px">_</span>,<span style="position:relative;top:3px">_</span>/  /<span style="position:relative;top:3px">_</span>/ /<span style="position:relative;top:3px">_</span>/<span style="position:relative;top:3px">_</span>/<span style="position:relative;top:3px">_</span>//<span style="position:relative;top:3px">_</span>/ \<span style="position:relative;top:3px">__</span>//<span style="position:relative;top:3px">___</span>/</div>
</body></html>
